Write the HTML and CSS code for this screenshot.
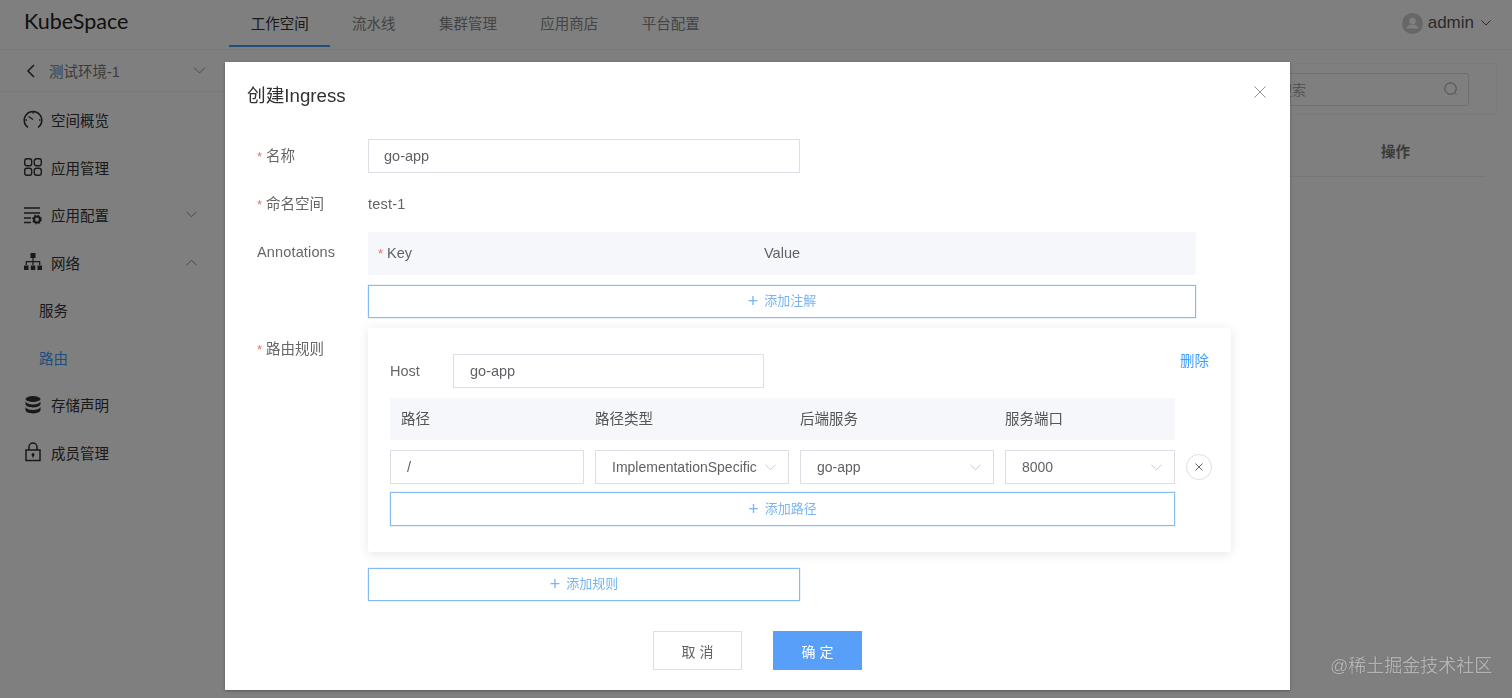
FILE: index.html
```html
<!DOCTYPE html>
<html lang="zh-CN">
<head>
<meta charset="utf-8">
<title>KubeSpace</title>
<link rel="stylesheet" href="styles.css">
</head>
<body>
<div class="app">
  <header class="topbar">
    <div class="logo">KubeSpace</div>
    <nav class="tabs">
      <a class="tab active">工作空间</a>
      <a class="tab">流水线</a>
      <a class="tab">集群管理</a>
      <a class="tab">应用商店</a>
      <a class="tab">平台配置</a>
    </nav>
    <div class="user">
      <svg class="avatar" viewBox="0 0 21 21"><circle cx="10.500" cy="10.500" r="10.500" fill="#cfcfcf"/><circle cx="10.500" cy="8" r="3.200" fill="#fff"/><path d="M4.500 15.500c.5-2.700 2.800-4 6-4s5.500 1.300 6 4z" fill="#fff"/></svg>
      <span class="user-name">admin</span>
      <svg class="chev-s" viewBox="0 0 10 6"><path d="M.5.500 5 5 9.500.5" fill="none" stroke="#555" stroke-width="1"/></svg>
    </div>
  </header>
  <div class="body">
    <aside class="sidebar">
      <div class="space-row">
        <svg class="back" viewBox="0 0 9 14"><path d="M8 1 2 7l6 6" fill="none" stroke="#333" stroke-width="1.500"/></svg>
        <span class="space-name">测试环境-1</span>
        <svg class="chev space-chev" viewBox="0 0 12 7"><path d="M.5.500 6 6 11.500.5" fill="none" stroke="#999" stroke-width="1"/></svg>
      </div>
      <ul class="menu">
        <li class="item">
          <svg class="ico" viewBox="0 0 20 20"><path d="M5 17.500A8.800 8.800 0 1 1 15 17.500" fill="none" stroke="#333" stroke-width="1.500"/><path d="M10 1.500v2M2.500 10h1.500M16 10h1.500M5.500 6.500l4.500 3" fill="none" stroke="#333" stroke-width="1.400"/></svg>
          <span>空间概览</span>
        </li>
        <li class="item">
          <svg class="ico" viewBox="0 0 20 20"><g fill="none" stroke="#333" stroke-width="1.400"><rect x="1.700" y="1.700" width="7" height="7" rx="2.200"/><rect x="11.300" y="1.700" width="7" height="7" rx="2.200"/><rect x="1.700" y="11.300" width="7" height="7" rx="2.200"/><rect x="11.300" y="11.300" width="7" height="7" rx="2.200"/></g></svg>
          <span>应用管理</span>
        </li>
        <li class="item">
          <svg class="ico" viewBox="0 0 20 20"><path d="M1 3h16M1 8h16M1 13h7M1 17.500h7" fill="none" stroke="#333" stroke-width="1.600"/><circle cx="14" cy="14.500" r="3" fill="none" stroke="#333" stroke-width="2.200"/><circle cx="14" cy="14.500" r="4.300" fill="none" stroke="#333" stroke-width="1.200" stroke-dasharray="1.600 1.800"/></svg>
          <span>应用配置</span>
          <svg class="chev" viewBox="0 0 12 7"><path d="M.5.500 6 6 11.500.5" fill="none" stroke="#888" stroke-width="1"/></svg>
        </li>
        <li class="item">
          <svg class="ico" viewBox="0 0 20 20"><path d="M7.500 1h5v5h-5zM1 13.500h4.500V18H1zM7.800 13.500h4.500V18H7.800zM14.500 13.500H19V18h-4.500z" fill="#333"/><path d="M10 6v7M3.300 13V9.700h13.400V13" fill="none" stroke="#333" stroke-width="1.200"/></svg>
          <span>网络</span>
          <svg class="chev" viewBox="0 0 12 7"><path d="M.5 6.500 6 1l5.500 5.500" fill="none" stroke="#888" stroke-width="1"/></svg>
        </li>
        <li class="item sub">服务</li>
        <li class="item sub current">路由</li>
        <li class="item">
          <svg class="ico" viewBox="0 0 20 20"><ellipse cx="10" cy="4" rx="7.500" ry="3" fill="#333"/><path d="M2.500 6.500c1 1.900 3.700 3 7.500 3s6.500-1.100 7.500-3V9c0 2-3.300 3.400-7.500 3.400S2.500 11 2.500 9zM2.500 12c1 1.900 3.700 3 7.500 3s6.500-1.100 7.500-3v3c0 2-3.300 3.400-7.500 3.400S2.500 17 2.500 15z" fill="#333"/></svg>
          <span>存储声明</span>
        </li>
        <li class="item">
          <svg class="ico" viewBox="0 0 20 20"><rect x="3" y="8" width="14" height="10.500" fill="none" stroke="#333" stroke-width="1.500"/><path d="M6 8V5a4 4 0 0 1 8 0v3" fill="none" stroke="#333" stroke-width="1.500"/><circle cx="10" cy="12.500" r="1.500" fill="#333"/><path d="M10 13v2.500" stroke="#333" stroke-width="1.400"/></svg>
          <span>成员管理</span>
        </li>
      </ul>
    </aside>
    <main class="main">
      <div class="toolbar">
        <div class="search"><span class="search-text">搜索</span>
          <svg class="search-ico" viewBox="0 0 14 14"><circle cx="6.500" cy="6.500" r="5.700" fill="none" stroke="#999" stroke-width="1"/><path d="m10.500 10.500 2 2" stroke="#999" stroke-width="1"/></svg>
        </div>
      </div>
      <div class="thead"><span class="th-op">操作</span></div>
    </main>
  </div>
</div>

<div class="overlay">
  <section class="modal">
    <div class="modal-head">
      <h2 class="modal-title">创建Ingress</h2>
      <svg class="close" viewBox="0 0 12 12"><path d="m.5.500 11 11M11.500.500l-11 11" fill="none" stroke="#909399" stroke-width="1"/></svg>
    </div>
    <form class="form">
      <div class="row row-name">
        <label class="label"><i class="star">*</i>名称</label>
        <div class="input wide">go-app</div>
      </div>
      <div class="row row-ns">
        <label class="label"><i class="star">*</i>命名空间</label>
        <div class="plain">test-1</div>
      </div>
      <div class="row row-anno">
        <label class="label label-anno">Annotations</label>
        <div class="anno">
          <div class="anno-head"><span class="anno-key"><i class="star">*</i>Key</span><span>Value</span></div>
          <div class="add"><span class="plus">+</span>添加注解</div>
        </div>
      </div>
      <div class="row row-rule">
        <label class="label label-rule"><i class="star">*</i>路由规则</label>
        <div class="rules">
          <div class="card">
            <div class="host-row">
              <span class="host-label">Host</span>
              <div class="input host-input">go-app</div>
              <a class="del">删除</a>
            </div>
            <div class="paths paths-head">
              <span class="first">路径</span><span>路径类型</span><span>后端服务</span><span>服务端口</span>
            </div>
            <div class="paths paths-row">
              <div class="input">/</div>
              <div class="input select"><span>ImplementationSpecific</span><svg class="chev" viewBox="0 0 12 7"><path d="M.5.500 6 6 11.500.5" fill="none" stroke="#c0c4cc" stroke-width="1"/></svg></div>
              <div class="input select"><span>go-app</span><svg class="chev" viewBox="0 0 12 7"><path d="M.5.500 6 6 11.500.5" fill="none" stroke="#c0c4cc" stroke-width="1"/></svg></div>
              <div class="input select"><span>8000</span><svg class="chev" viewBox="0 0 12 7"><path d="M.5.500 6 6 11.500.5" fill="none" stroke="#c0c4cc" stroke-width="1"/></svg></div>
              <div class="round"><svg viewBox="0 0 8 8"><path d="m.5.500 7 7M7.500.500l-7 7" fill="none" stroke="#666" stroke-width="1"/></svg></div>
            </div>
            <div class="add add-path"><span class="plus">+</span>添加路径</div>
          </div>
          <div class="add add-rule"><span class="plus">+</span>添加规则</div>
        </div>
      </div>
    </form>
    <div class="footer">
      <button class="btn" type="button">取 消</button>
      <button class="btn primary" type="button">确 定</button>
    </div>
  </section>
</div>
<div class="watermark">@稀土掘金技术社区</div>
</body>
</html>
```
FILE: styles.css
```css
* { box-sizing: border-box; }
html, body { margin: 0; height: 100%; overflow: hidden; }
body {
  font-family: "Liberation Sans", "Noto Sans CJK SC", sans-serif;
  font-size: 14.5px;
  color: #333;
  background: #fff;
}
.app { height: 698px; display: flex; flex-direction: column; }

/* top bar */
.topbar { height: 50px; flex: none; display: flex; border-bottom: 1px solid #f2f2f2; }
.logo { width: 229px; flex: none; padding: 6px 0 0 24px; font-family: "Lato", sans-serif; font-size: 21.500px; line-height: 30px; color: #222; }
.tabs { display: flex; }
.tab { height: 47px; padding: 0 21.700px; line-height: 48px; color: #888; }
.tab.active { color: #333; border-bottom: 2px solid #409eff; }
.user { margin-left: auto; display: flex; align-items: center; height: 46px; padding-right: 21px; color: #555; }
.avatar { width: 21px; height: 21px; margin-right: 5px; }
.user-name { font-size: 17px; }
.chev-s { width: 10px; height: 6px; margin-left: 7px; }

/* sidebar */
.body { flex: 1; display: flex; min-height: 0; }
.sidebar { width: 225px; flex: none; }
.space-row { height: 42px; display: flex; align-items: center; padding: 0 19px 0 26px; border-bottom: 1px solid #f4f4f4; }
.back { width: 9px; height: 14px; margin-right: 14px; }
.space-name { color: #777; flex: 1; }
.menu { list-style: none; margin: 4px 0 0; padding: 0; }
.item { height: 47.500px; display: flex; align-items: center; padding: 0 28px 0 23px; }
.ico { width: 20px; height: 20px; margin-right: 8px; flex: none; }
.item .chev { margin-left: auto; }
.chev { width: 11px; height: 7px; flex: none; }
.space-chev { width: 13px; }
.sub { padding-left: 39px; }
.current { color: #409eff; }

/* page behind the dialog */
.main { flex: 1; padding: 13px 15px 0 0; min-width: 0; }
.toolbar { height: 52px; border: 1px solid #f5f5f5; border-radius: 3px; display: flex; justify-content: flex-end; align-items: center; padding-right: 27px; }
.search { width: 300px; height: 33px; border: 1px solid #dcdfe6; border-radius: 3px; display: flex; align-items: center; justify-content: space-between; padding: 0 10px 0 108px; color: #aaa; font-size: 14px; }
.search-ico { width: 14px; height: 14px; }
.thead { height: 62px; border-bottom: 1px solid #ebeef5; display: flex; align-items: center; justify-content: flex-end; margin-right: 12px; padding: 10px 75px 0 0; }
.th-op { font-weight: 700; color: #777; }

/* dialog */
.overlay { position: fixed; inset: 0; background: rgba(0, 0, 0, .5); padding: 62px 0 0 225px; }
.modal { width: 1065px; height: 628px; background: #fff; box-shadow: 0 1px 3px rgba(0, 0, 0, .3); position: relative; padding: 0 0 20px 32px; }
.modal-head { height: 77px; padding: 21px 0 0; }
.modal-title { margin: 0 0 0 -10px; font-size: 18.700px; font-weight: 400; line-height: 26px; color: #303133; }
.close { position: absolute; top: 24px; right: 24px; width: 12px; height: 12px; }

.row { display: grid; grid-template-columns: 111px 1fr; }
.row-name, .row-ns { height: 34px; }
.row-ns { margin-top: 14px; }
.row-anno { margin-top: 11px; }
.row-rule { margin-top: 10px; }
.label { height: 34px; line-height: 34px; color: #666; white-space: nowrap; }
.label-anno { padding-top: 3px; height: 37px; letter-spacing: .15px; }
.label-rule { padding-top: 4px; height: 38px; }
.star { font-style: normal; color: #f56c6c; margin-right: 4px; font-size: 13px; }
.plain { line-height: 34px; height: 34px; color: #606266; letter-spacing: .2px; }

.input { height: 34px; line-height: 32px; padding: 0 15px; border: 1px solid #dcdfe6; color: #606266; white-space: nowrap; }
.wide { width: 432px; }

.anno-head { width: 828px; height: 43px; background: #f5f7fa; display: grid; grid-template-columns: 396px 1fr; align-items: center; color: #606266; line-height: 41px; }
.anno-key { padding-left: 10px; }
.add { height: 33px; margin-top: 10px; width: 828px; border: 1px solid #85bbf5; box-shadow: 0 0 1px #85bbf5; display: flex; align-items: center; justify-content: center; color: #79b4f3; font-size: 13px; line-height: 18px; padding-bottom: 1px; }
.plus { font-size: 18px; font-weight: 300; margin-right: 6px; line-height: 1; }

.card { width: 863px; height: 224px; padding: 26px 22px; border-radius: 3px; box-shadow: 0 2px 12px rgba(0, 0, 0, .1); }
.host-row { display: flex; align-items: center; height: 34px; }
.host-label { width: 63px; color: #666; }
.host-input { width: 311px; padding-left: 16px; }
.del { margin: -24px 0 0 auto; color: #409eff; }
.paths { display: grid; grid-template-columns: 194px 194px 194px 170px; column-gap: 11px; width: 785px; }
.paths-head { height: 42px; margin-top: 10px; background: #f5f7fa; align-items: center; color: #555; padding-bottom: 4px; }
.first { padding-left: 11px; }
.paths-row { margin-top: 10px; position: relative; }
.paths-row .input { padding-left: 16px; }
.select { display: flex; align-items: center; justify-content: space-between; font-size: 14px; padding-right: 12px; }
.select span { overflow: hidden; }
.round { position: absolute; left: 796px; top: 4px; width: 26px; height: 26px; border: 1px solid #dcdfe6; border-radius: 50%; display: flex; align-items: center; justify-content: center; }
.round svg { width: 8px; height: 8px; }
.add-path { width: 785px; height: 34px; margin-top: 8px; }
.add-rule { width: 432px; margin-top: 16px; height: 33px; }

.footer { margin-top: 30px; display: flex; gap: 31px; padding-left: 396px; }
.btn { width: 89px; height: 39px; border: 1px solid #dcdfe6; background: #fff; color: #606266; font-family: inherit; font-size: 14px; padding: 0; }
.primary { background: #589ffa; border-color: #589ffa; color: #fff; }

.watermark { position: fixed; left: 1330px; top: 653px; font-size: 18px; line-height: 26px; color: #b4b4b4; text-shadow: 0 0 1px #555; white-space: nowrap; }
```
